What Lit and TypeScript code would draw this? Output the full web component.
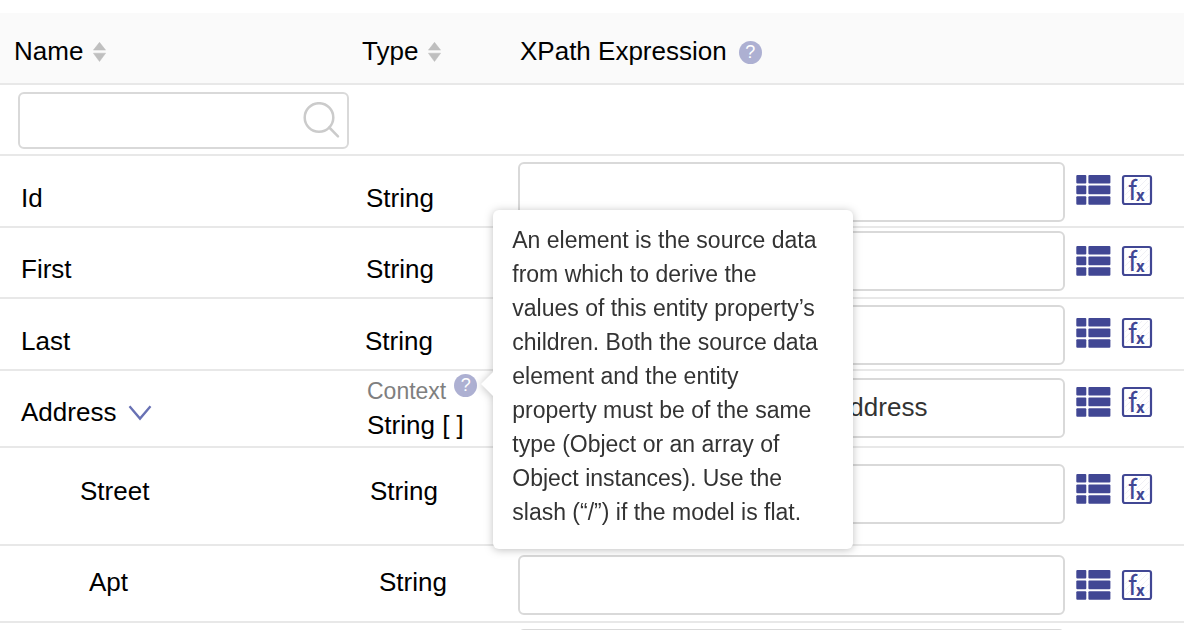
import { LitElement, html, css, svg, nothing } from "lit";
import { customElement, property, state } from "lit/decorators.js";

interface PropertyRow {
  kind: string;
  name: string;
  type: string;
  value?: string;
  context?: boolean;
  expandable?: boolean;
  actions?: boolean;
}

const ROWS: PropertyRow[] = [
  { kind: "id", name: "Id", type: "String" },
  { kind: "first", name: "First", type: "String" },
  { kind: "last", name: "Last", type: "String" },
  { kind: "address", name: "Address", type: "String [ ]", value: "Address", context: true, expandable: true },
  { kind: "street", name: "Street", type: "String" },
  { kind: "apt", name: "Apt", type: "String" },
  { kind: "more", name: "", type: "", actions: false },
];

const sortIcon = svg`<svg width="13" height="20" viewBox="0 0 13 20" aria-hidden="true">
  <path d="M6.5 0.3 L12.6 8.1 H0.4 Z M6.5 19.5 L12.6 11.2 H0.4 Z" fill="#bfbfbf" stroke="#bfbfbf" stroke-width=".5" stroke-linejoin="round"/>
</svg>`;

const searchIcon = svg`<svg class="search-icon" width="38" height="38" viewBox="0 0 38 38" aria-hidden="true">
  <circle cx="17" cy="15.5" r="14.3" fill="none" stroke="#cbcbcb" stroke-width="2.5"/>
  <path d="M27.3 25.5 L36 34.3" stroke="#cbcbcb" stroke-width="2.5" stroke-linecap="round"/>
</svg>`;

const chevronIcon = svg`<svg width="24" height="16" viewBox="0 0 24 16" aria-hidden="true">
  <path d="M1.5 1.2 L12 13.6 L22.5 1.2" fill="none" stroke="#6871b4" stroke-width="2.3"/>
</svg>`;

const listIcon = svg`<svg width="35" height="30" viewBox="0 0 35 30" aria-hidden="true">
  <g fill="#414794">
    <rect x="0.3" y="0" width="10" height="8.6" rx="1"/><rect x="12.4" y="0" width="22" height="8.6" rx="1"/>
    <rect x="0.3" y="10.6" width="10" height="8.6" rx="1"/><rect x="12.4" y="10.6" width="22" height="8.6" rx="1"/>
    <rect x="0.3" y="21.2" width="10" height="8.6" rx="1"/><rect x="12.4" y="21.2" width="22" height="8.6" rx="1"/>
  </g>
</svg>`;

const formulaIcon = svg`<svg class="formula" width="30" height="30" viewBox="0 0 30 30" aria-hidden="true">
  <path d="M3 14 L14 3 M3 20 L20 3 M4 25 L26 3 M9 26 L27 8 M15 26 L27 14 M21 26 L27 20" stroke="#f0f0f5" stroke-width="1"/>
  <rect x="1" y="1" width="28" height="28" rx="2" fill="none" stroke="#414794" stroke-width="2.2"/>
  <text x="6" y="25" font-family="Roboto, sans-serif" font-size="27" fill="#414794">f</text>
  <text x="14" y="25.5" font-family="Roboto, sans-serif" font-size="17" font-weight="700" fill="#414794">x</text>
</svg>`;

@customElement("help-button")
export class HelpButton extends LitElement {
  @property() label = "";

  static styles = css`
    :host { display: inline-flex; }
    .help {
      width: 23px;
      height: 23px;
      padding: 0;
      border: 0;
      border-radius: 50%;
      background: #adb0d2;
      color: #fff;
      font: 18px/23px "Liberation Sans", Arial, sans-serif;
      text-align: center;
      cursor: pointer;
    }
  `;

  render() {
    return html`<button class="help" type="button" aria-label=${this.label}>?</button>`;
  }
}

@customElement("app-root")
export class AppRoot extends LitElement {
  @state() private tipOpen = true;

  static styles = css`
    :host {
      display: block;
      box-sizing: border-box;
      height: 100vh;
      padding-top: 13px;
      overflow: hidden;
      background: #fff;
      color: #000;
      font: 26px/30px "Liberation Sans", Arial, sans-serif;
    }
    table { width: 100%; table-layout: fixed; border-collapse: separate; border-spacing: 0; }
    .col-name { width: 350px; }
    .col-type { width: 156px; }
    .col-actions { width: 119px; }
    th, td {
      box-sizing: border-box;
      padding: 0;
      border-bottom: 2px solid #e8e8e8;
      text-align: left;
      vertical-align: top;
      font-weight: 400;
    }
    button { padding: 0; border: 0; background: none; color: inherit; font: inherit; cursor: pointer; display: flex; }
    svg { display: block; }

    th { height: 72px; padding-top: 23px; background: #fafafa; }
    .head { display: flex; align-items: center; gap: 10px; }
    .head-name { padding-left: 14px; }
    .head-type { padding-left: 12px; }
    .head-path { padding-left: 14px; gap: 12px; }
    .head svg, .head help-button { margin-top: 2px; }

    .filter { height: 71px; padding: 7px 0 0 18px; }
    .search { display: flex; align-items: center; box-sizing: border-box; width: 331px; height: 57px; padding: 0 7px 0 12px; border: 2px solid #d9d9d9; border-radius: 6px; }
    .search input { flex: 1; min-width: 0; border: 0; outline: 0; background: none; font: inherit; }
    .search-icon { flex: none; }
    .formula { overflow: visible; }

    .name { display: flex; align-items: center; gap: 12px; padding: var(--text-top) 0 0 var(--indent, 21px); }
    .name svg { margin-top: 2px; }
    .type { padding: var(--type-top, var(--text-top)) 0 0 var(--type-left, 16px); }
    .path { padding: var(--field-top) 0 var(--field-bottom) 12px; }
    .path input {
      display: block;
      box-sizing: border-box;
      width: 100%;
      height: 60px;
      padding: 0 16px 2px;
      border: 2px solid #d9d9d9;
      border-radius: 6px;
      background: #fff;
      color: #333;
      font: inherit;
    }
    .actions { display: flex; gap: 11px; padding: var(--icon-top) 0 0 11px; }

    .id { --text-top: 27px; --field-top: 6px; --field-bottom: 4px; --icon-top: 19px; }
    .first { --text-top: 26px; --field-top: 3px; --field-bottom: 6px; --icon-top: 18px; }
    .last { --text-top: 27px; --field-top: 6px; --field-bottom: 4px; --icon-top: 19px; --type-left: 15px; }
    .address { --text-top: 26px; --type-top: 3px; --field-top: 7px; --field-bottom: 8px; --icon-top: 16px; --type-left: 17px; }
    .street { --text-top: 28px; --field-top: 16px; --field-bottom: 20px; --icon-top: 26px; --indent: 80px; --type-left: 20px; }
    .apt { --text-top: 21px; --field-top: 9px; --field-bottom: 6px; --icon-top: 24px; --indent: 89px; --type-left: 29px; }
    .more { --text-top: 26px; --field-top: 6px; --field-bottom: 4px; --icon-top: 19px; }
    .address .path input { padding-left: 312px; }

    .context { display: flex; align-items: flex-start; gap: 8px; height: 36px; color: #7f7f7f; font-size: 23px; }
    .context-label { padding-top: 2px; }
    .anchor { position: relative; display: flex; }
    .tip {
      position: absolute;
      left: calc(100% + 16px);
      top: -164px;
      box-sizing: border-box;
      width: 360px;
      padding: 13px 32px 20px 19px;
      border-radius: 6px;
      background: #fff;
      color: #333;
      font-size: 23px;
      line-height: 34px;
      filter: drop-shadow(0 1px 4px rgba(0, 0, 0, 0.25));
    }
    .tip::before {
      content: "";
      position: absolute;
      left: -12px;
      top: 162px;
      border: solid transparent;
      border-width: 12px 12px 12px 0;
      border-right-color: #fff;
    }
  `;

  private renderType(row: PropertyRow) {
    return html`
      ${row.context
        ? html`<div class="context">
            <span class="context-label">Context</span>
            <span class="anchor">
              <help-button label="About context" @click=${() => (this.tipOpen = !this.tipOpen)}></help-button>
              ${this.tipOpen
                ? html`<div class="tip" role="tooltip">An element is the source data from which to derive the values of this entity property’s children. Both the source data element and the entity property must be of the same type (Object or an array of Object instances). Use the slash (“/”) if the model is flat.</div>`
                : nothing}
            </span>
          </div>`
        : nothing}
      <div>${row.type}</div>
    `;
  }

  private renderRow(row: PropertyRow) {
    return html`<tr class=${row.kind}>
      <td><div class="name">
        <span>${row.name}</span>
        ${row.expandable ? html`<button type="button" aria-label="Collapse" aria-expanded="true">${chevronIcon}</button>` : nothing}
      </div></td>
      <td><div class="type">${this.renderType(row)}</div></td>
      <td><div class="path"><input type="text" aria-label="XPath expression" .value=${row.value ?? ""} /></div></td>
      <td>${row.actions === false
        ? nothing
        : html`<div class="actions">
            <button type="button" aria-label="Choose element">${listIcon}</button>
            <button type="button" aria-label="Edit function">${formulaIcon}</button>
          </div>`}</td>
    </tr>`;
  }

  render() {
    return html`<table>
      <colgroup>
        <col class="col-name" /><col class="col-type" /><col /><col class="col-actions" />
      </colgroup>
      <thead>
        <tr>
          <th><div class="head head-name">Name <button type="button" aria-label="Sort by name">${sortIcon}</button></div></th>
          <th><div class="head head-type">Type <button type="button" aria-label="Sort by type">${sortIcon}</button></div></th>
          <th colspan="2"><div class="head head-path">XPath Expression <help-button label="About XPath expressions"></help-button></div></th>
        </tr>
      </thead>
      <tbody>
        <tr>
          <td class="filter" colspan="4">
            <label class="search"><input type="text" aria-label="Filter by name" />${searchIcon}</label>
          </td>
        </tr>
        ${ROWS.map((row) => this.renderRow(row))}
      </tbody>
    </table>`;
  }
}
